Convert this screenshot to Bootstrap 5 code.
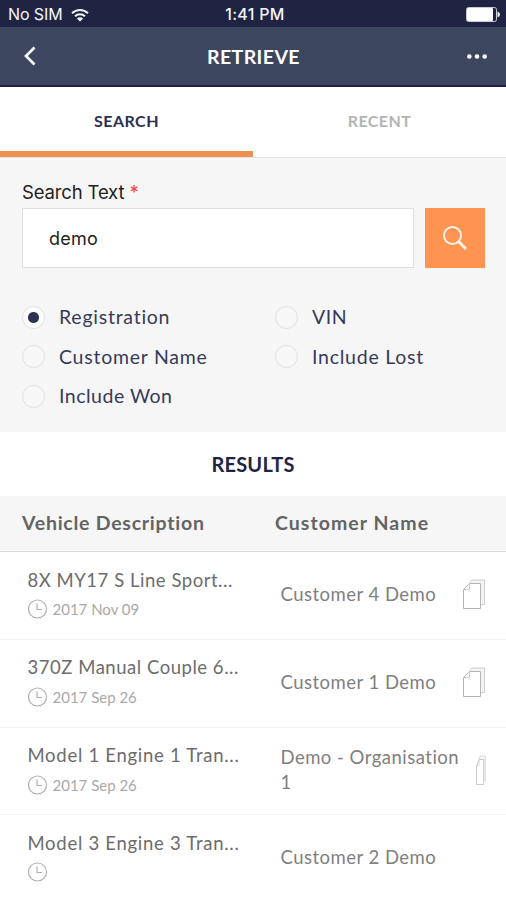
<!DOCTYPE html>
<html lang="en">
<head>
<meta charset="utf-8">
<meta name="viewport" content="width=device-width, initial-scale=1">
<title>Retrieve</title>
<link href="https://cdn.jsdelivr.net/npm/bootstrap@5.3.0/dist/css/bootstrap.min.css" rel="stylesheet">
<style>
  :root { --navy: #1f2443; --slate: #3c465e; --accent: #ff9351; --panel: #f6f6f6; }
  body { font-family: Lato, sans-serif; color: var(--navy); height: 900px; overflow: hidden; background: #fff; line-height: 1.25; }
  .status-bar { height: 27px; background: var(--navy); color: #f4f5fa; font: 500 16px/29px Inter, sans-serif; padding: 0 6px 0 8px; display: grid; grid-template-columns: 1fr auto 1fr; }
  .status-bar .carrier { font-weight: 400; font-size: 16px; letter-spacing: -.1px; }
  .status-bar .clock { letter-spacing: .3px; padding-left: 2px; }
  .title-bar { height: 60px; background: var(--slate); border-bottom: 2px solid #1b2148; color: #fff; padding: 0 18px 0 23px; display: grid; grid-template-columns: 1fr auto 1fr; }
  .title-bar h1 { font-size: 19.5px; font-weight: 700; letter-spacing: .4px; padding: 1px 4px 0 0; }
  .tab-strip { height: 71px; border-bottom: 1px solid #e2e2e2; }
  .tab-strip .nav-link { color: #b4b4b4; font-size: 16px; font-weight: 700; letter-spacing: .45px; border-radius: 0; height: 70px; border-bottom: 6px solid transparent; padding: 4px 0 0; display: flex; align-items: center; justify-content: center; }
  .tab-strip .nav-link.active { color: #2c3052; background: none; border-color: #f09050; }
  .search-panel { background: var(--panel); height: 274px; padding: 23px 21px 0 22px; }
  .search-panel .form-label { font: 400 18.5px/23px Inter, sans-serif; color: #222; letter-spacing: -.15px; margin-bottom: 4px; display: block; }
  .form-label .required { color: #f0453c; }
  .search-row { gap: 11px; }
  .search-field { height: 60px; border: 1.5px solid #e0e0e0; border-radius: 0; font: 400 18px Inter, sans-serif; color: #222; padding: 0 26px; letter-spacing: .2px; }
  .search-btn { width: 60px; height: 60px; border-radius: 0; background: var(--accent); padding: 0; flex: none; }
  .options { padding-top: 30px; margin-right: -43px !important; }
  .options .col-6 { height: 39.3px; display: flex; align-items: center; }
  .options .form-check-input { width: 23px; height: 23px; margin: 0 14px 0 0; border: 1px solid #e0e0e0; background-color: #f7f7f7; float: none; flex: none; }
  .options .form-check-input:checked { background: radial-gradient(circle at 50% 50%, #2b3456 0 5px, #fcfcfc 6px); border-color: #e0e0e0; }
  .options label { font-size: 19.5px; letter-spacing: .75px; color: #363b5a; }
  .options label.tight { letter-spacing: .5px; }
  .results-title { height: 64px; font-size: 20px; font-weight: 700; letter-spacing: .2px; }
  .list-head { height: 56px; background: var(--panel); border-bottom: 1px solid #dcdcdc; font-size: 19.5px; font-weight: 700; letter-spacing: .75px; color: #646464; padding-left: 22px; }
  .list-head .head-vehicle { width: 253px; }
  .list-head .head-customer { letter-spacing: 1.05px; }
  .result { height: 87.75px; border-bottom: 1px solid #f3f3f3; padding: 0 20px 0 27.5px; color: #6c6c6c; }
  .result:nth-of-type(n) { position: static; }
  .result .vehicle { width: 253px; flex: none; padding-top: 15.5px; align-self: flex-start; }
  .result .model { font-size: 18.5px; line-height: 25px; letter-spacing: .53px; white-space: nowrap; }
  .result .model.wide { letter-spacing: .72px; }
  .result .stamp { font-size: 15px; line-height: 20px; letter-spacing: 0; color: #a8a8a8; height: 22px; margin-top: 5.5px; }
  .result .stamp span { padding-left: 1px; }
  .result .customer { font-size: 18.5px; line-height: 25px; letter-spacing: .48px; color: #808080; padding-bottom: 2px; }
  .result .pages { margin-bottom: 2px; }
</style>
</head>
<body>
<svg class="d-none">
  <symbol id="clock" viewBox="0 0 20 20"><circle cx="9.500" cy="10" r="9" fill="none" stroke="#b0b0b0" stroke-width="1.200"/><path d="M9 4.500v6h5" fill="none" stroke="#b0b0b0" stroke-width="1.200"/></symbol>
  <symbol id="pages" viewBox="0 0 24 30" preserveAspectRatio="none"><path d="M7.500 4 10 1H22.500V25.500H18.500" fill="#f4f4f4" stroke="#cdcdcd"/><path d="M7.500 4.500H18.500V29.500H1.500V10.500Z" fill="#fff" stroke="#b4b4b4"/><path d="M7.500 4.500V10.500H1.500" fill="none" stroke="#ccc"/></symbol>
</svg>

<div class="status-bar">
  <div class="carrier d-flex align-items-center">No SIM
    <svg class="ms-2" width="18" height="14" viewBox="0 0 18 14" fill="none" stroke="#f4f5fa" stroke-width="2"><path d="M1 5.300a11.500 11.500 0 0 1 16 0M4 8.300a7.200 7.200 0 0 1 10 0"/><path d="M9 13.500 5.800 10.600a4.800 4.800 0 0 1 6.400 0Z" fill="#f4f5fa" stroke="none"/></svg>
  </div>
  <div class="clock">1:41 PM</div>
  <div class="d-flex align-items-center justify-content-end">
    <svg width="34" height="15" viewBox="0 0 34 15"><rect x=".5" y=".5" width="30" height="14" rx="2" fill="#1f2443" stroke="#c9cbd5"/><rect x="1" y="1" width="26" height="13" rx="1" fill="#fff"/><path d="M31.500 4.500q2.500 1 2.500 3t-2.500 3Z" fill="#f4f5fa"/></svg>
  </div>
</div>

<header class="title-bar align-items-center">
  <svg width="14" height="20" viewBox="0 0 14 20"><path d="M11.500 1.500 3 10l8.500 8.500" fill="none" stroke="#fff" stroke-width="2.700"/></svg>
  <h1 class="m-0">RETRIEVE</h1>
  <svg class="ms-auto" width="22" height="6" viewBox="0 0 22 6" fill="#fff"><circle cx="3.300" cy="3.500" r="2.300"/><circle cx="11" cy="3.500" r="2.300"/><circle cx="18.700" cy="3.500" r="2.300"/></svg>
</header>

<nav class="nav nav-pills nav-justified tab-strip">
  <a class="nav-link active" href="#">SEARCH</a>
  <a class="nav-link" href="#">RECENT</a>
</nav>

<form class="search-panel">
  <label class="form-label" for="q">Search Text <span class="required">*</span></label>
  <div class="d-flex search-row">
    <input id="q" class="form-control search-field" type="text" value="demo">
    <button class="btn search-btn d-flex align-items-center justify-content-center" type="button" aria-label="Search">
      <svg width="26" height="26" viewBox="0 0 26 26" fill="none" stroke="#fff3e6"><circle cx="10.500" cy="10.500" r="8.500" stroke-width="2"/><path d="m16.500 16.500 7.500 7.500" stroke-width="3"/></svg>
    </button>
  </div>
  <div class="row g-0 options">
    <div class="col-6"><input class="form-check-input" type="radio" id="o1" checked><label for="o1">Registration</label></div>
    <div class="col-6"><input class="form-check-input" type="radio" id="o2"><label for="o2" class="tight">VIN</label></div>
    <div class="col-6"><input class="form-check-input" type="radio" id="o3"><label for="o3">Customer Name</label></div>
    <div class="col-6"><input class="form-check-input" type="radio" id="o4"><label for="o4">Include Lost</label></div>
    <div class="col-6"><input class="form-check-input" type="radio" id="o5"><label for="o5" class="tight">Include Won</label></div>
  </div>
</form>

<h2 class="results-title m-0 d-flex align-items-center justify-content-center">RESULTS</h2>

<div class="list-head d-flex align-items-center">
  <div class="head-vehicle">Vehicle Description</div>
  <div class="head-customer">Customer Name</div>
</div>

<div class="result d-flex align-items-center">
  <div class="vehicle"><div class="model">8X MY17 S Line Sport...</div><div class="stamp d-flex align-items-center"><svg class="me-1" width="20" height="20"><use href="#clock"/></svg><span>2017 Nov 09</span></div></div>
  <div class="customer">Customer 4 Demo</div>
  <svg class="pages ms-auto flex-shrink-0" width="24" height="30"><use href="#pages"/></svg>
</div>
<div class="result d-flex align-items-center">
  <div class="vehicle"><div class="model">370Z Manual Couple 6...</div><div class="stamp d-flex align-items-center"><svg class="me-1" width="20" height="20"><use href="#clock"/></svg><span>2017 Sep 26</span></div></div>
  <div class="customer">Customer 1 Demo</div>
  <svg class="pages ms-auto flex-shrink-0" width="24" height="30"><use href="#pages"/></svg>
</div>
<div class="result d-flex align-items-center">
  <div class="vehicle"><div class="model wide">Model 1 Engine 1 Tran...</div><div class="stamp d-flex align-items-center"><svg class="me-1" width="20" height="20"><use href="#clock"/></svg><span>2017 Sep 26</span></div></div>
  <div class="customer">Demo - Organisation<br>1</div>
  <svg class="pages ms-auto flex-shrink-0" width="10" height="30"><use href="#pages"/></svg>
</div>
<div class="result d-flex align-items-center">
  <div class="vehicle"><div class="model wide">Model 3 Engine 3 Tran...</div><div class="stamp d-flex align-items-center"><svg width="20" height="20"><use href="#clock"/></svg></div></div>
  <div class="customer">Customer 2 Demo</div>
</div>
<script src="https://cdn.jsdelivr.net/npm/bootstrap@5.3.0/dist/js/bootstrap.bundle.min.js"></script>
</body>
</html>
